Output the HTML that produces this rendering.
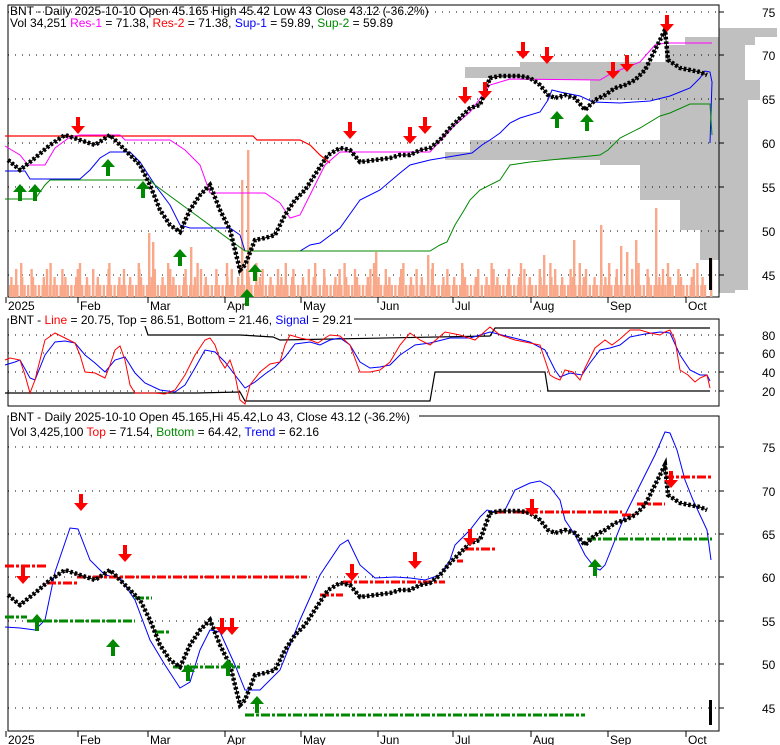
<!DOCTYPE html>
<html><head><meta charset="utf-8"><style>
html,body{margin:0;padding:0;background:#fff;width:780px;height:745px;overflow:hidden}
svg{display:block}
text{font-family:"Liberation Sans",Arial,sans-serif;font-size:12px;fill:#000}
.ax{font-size:13px}
.g{stroke:#000;stroke-width:1;stroke-dasharray:1 6;fill:none}
.t{stroke:#000;stroke-width:1}
</style></head><body>
<svg width="780" height="745" viewBox="0 0 780 745" xmlns="http://www.w3.org/2000/svg">
<defs>
<polyline id="price" fill="none" points="8,160 20,170 35,158 50,145 65,135 80,140 95,145 110,135 125,150 140,165 150,185 160,210 170,225 180,232 190,210 200,195 210,185 220,210 230,230 240,270 245,265 255,240 265,238 275,235 285,215 295,200 305,190 318,170 328,155 340,148 350,150 360,162 375,160 390,158 400,155 410,155 420,150 430,148 440,140 450,128 460,118 470,108 480,105 490,78 500,76 510,76 520,76 530,78 540,85 548,95 555,98 565,95 575,98 585,110 595,100 605,95 615,88 625,85 635,80 645,70 655,50 665,30 668,60 680,68 690,70 700,72 707,75"/>
<path id="dn" d="M-2,-16h4v9h5l-7,8l-7,-8h5z"/>
<path id="up" d="M-2,16h4v-9h5l-7,-8l-7,8h5z"/>
</defs>
<polygon fill="#c0c0c0" points="719,28 777,28 777,37 755,37 755,45 745,45 745,80 760,80 760,100 748,100 748,290 735,290 735,293 719,293 719,260 700,260 700,230 680,230 680,200 640,200 640,165 600,165 600,160 445,160 445,152 470,152 470,140 660,140 660,100 590,100 590,80 520,80 520,78 465,78 465,67 520,67 520,62 665,62 665,45 685,45 685,37 719,37"/>
<rect x="8" y="5" width="711" height="292" fill="none" stroke="#000"/>
<rect x="8" y="319" width="711" height="87" fill="none" stroke="#000"/>
<rect x="8" y="416" width="711" height="315" fill="none" stroke="#000"/>
<path class="g" d="M8,12H719M8,55H719M8,99H719M8,143H719M8,187H719M8,231H719M8,275H719M8,335H719M8,353H719M8,372H719M8,391H719M8,447H719M8,491H719M8,534H719M8,577H719M8,621H719M8,664H719M8,708H719"/>
<path class="t" d="M719,12h5M719,55h5M719,99h5M719,143h5M719,187h5M719,231h5M719,275h5M719,335h5M719,353h5M719,372h5M719,391h5M719,447h5M719,491h5M719,534h5M719,577h5M719,621h5M719,664h5M719,708h5M6,297v6M78,297v6M148,297v6M225,297v6M301,297v6M378,297v6M453,297v6M531,297v6M608,297v6M686,297v6M6,731v6M78,731v6M148,731v6M225,731v6M301,731v6M378,731v6M453,731v6M531,731v6M608,731v6M686,731v6"/>
<g fill="none" stroke="#f9a98a">
<line x1="9" y1="291" x2="707" y2="291" stroke-width="12" stroke-dasharray="2.4 1.2"/>
<line x1="10.2" y1="287" x2="707" y2="287" stroke-width="20" stroke-dasharray="2.4 8.4"/>
<line x1="15" y1="283" x2="707" y2="283" stroke-width="28" stroke-dasharray="2.4 13"/>
<line x1="20" y1="280" x2="707" y2="280" stroke-width="34" stroke-dasharray="2.4 27"/>
</g>
<path fill="#f9a98a" d="M247,150h2.4V297h-2.4zM241,180h2.4V297h-2.4zM148,233h2.4V297h-2.4zM152,242h2.4V297h-2.4zM190,247h2.4V297h-2.4zM655,208h2.4V297h-2.4zM635,240h2.4V297h-2.4zM626,252h2.4V297h-2.4zM620,246h2.4V297h-2.4zM375,252h2.4V297h-2.4zM427,255h2.4V297h-2.4zM600,225h2.4V297h-2.4zM710,258h2.4V297h-2.4zM543,255h2.4V297h-2.4zM573,240h2.4V297h-2.4z"/>
<polyline fill="none" stroke="#f00" stroke-width="1.2" points="5,136 253,136 257,140 300,140 310,145 320,155 330,163"/>
<polyline fill="none" stroke="#f0f" stroke-width="1" points="5,146 20,155 28,165 45,165 55,148 70,137 80,135 120,135 125,140 170,140 185,150 195,160 200,165 210,193 265,193 280,203 290,218 300,215 310,195 325,165 340,152 430,152 440,141 455,125 470,112 490,85 510,79 600,80 612,73 625,68 640,62 655,45 665,43 712,43"/>
<polyline fill="none" stroke="#00f" stroke-width="1" points="5,171 25,171 30,179 80,179 90,170 100,158 110,152 130,152 140,162 155,185 170,205 180,225 190,228 230,228 240,235 245,251 300,251 310,245 320,243 340,228 360,200 380,190 400,173 410,165 430,160 472,153 482,145 490,140 500,133 510,123 520,118 540,112 548,100 552,90 560,92 580,96 593,102 620,103 650,101 670,96 690,88 700,78 705,71 710,72 712,82 710,143"/>
<polyline fill="none" stroke="#080" stroke-width="1" points="5,199 35,199 45,185 50,180 150,180 155,185 245,251 430,251 440,245 447,242 455,225 463,212 470,200 480,190 500,180 510,165 530,162 550,160 570,158 600,155 608,150 620,138 640,128 660,116 670,113 690,104 710,104 712,135"/>
<use href="#price" stroke="#000" stroke-width="1"/>
<use href="#price" stroke="#000" stroke-width="4.5" stroke-dasharray="2.6 2"/>
<path fill="#000" d="M709,258h3v32h-3z"/>
<polyline fill="none" stroke="#000" stroke-width="1.2" points="145,326 148,335 240,335 273,337 280,340 490,336 495,328 710,328"/>
<polyline fill="none" stroke="#000" stroke-width="1.2" points="5,393 197,393 240,392 245,401 430,401 435,372 545,372 548,391 710,391"/>
<polyline fill="none" stroke="#00f" stroke-width="1" points="5,365 15,362 20,360 30,378 35,380 45,355 55,342 65,341 75,343 85,355 95,363 105,372 115,360 125,357 135,373 145,383 160,390 175,392 185,385 195,368 205,350 215,352 225,362 235,375 245,388 255,382 265,374 275,367 285,357 295,344 310,342 320,345 330,340 340,338 350,345 360,362 370,368 380,367 390,365 400,355 415,345 430,343 450,338 470,338 490,332 510,337 530,342 545,350 555,370 560,377 570,373 582,375 590,363 600,350 610,348 620,345 630,337 645,334 660,332 670,333 680,355 690,370 700,375 707,375 710,381"/>
<polyline fill="none" stroke="#f00" stroke-width="1" points="5,360 10,358 20,360 25,375 30,393 35,380 45,340 55,333 65,338 75,343 80,355 85,372 95,373 105,378 110,365 115,350 120,346 125,360 130,385 135,393 155,393 165,394 175,390 185,375 195,355 205,340 210,338 215,345 220,360 225,368 230,360 235,375 240,400 245,404 250,385 260,372 270,364 280,362 285,345 290,335 300,338 310,340 318,343 325,338 330,335 340,336 350,345 360,372 370,372 380,370 390,362 400,345 410,333 420,340 430,345 445,332 460,335 475,340 490,327 500,335 515,340 530,343 540,345 545,360 550,375 555,378 560,380 565,370 573,372 580,380 585,368 595,348 605,340 612,345 620,339 630,330 640,330 650,333 660,335 665,332 670,330 675,340 680,370 688,375 695,382 700,378 707,375 710,388"/>
<polyline fill="none" stroke="#00f" stroke-width="1" points="5,627 20,628 35,630 45,620 55,572 70,528 78,529 90,560 105,575 120,578 135,600 150,640 165,665 180,688 190,682 200,650 210,630 220,632 235,665 245,690 260,690 280,670 300,620 320,575 340,545 348,540 360,565 375,578 395,577 410,578 425,580 440,575 450,560 455,545 470,530 480,517 487,510 500,513 505,510 515,490 530,483 540,481 550,487 560,500 565,520 575,535 585,555 595,568 600,570 605,565 615,540 625,515 635,495 645,475 655,455 665,432 670,433 677,450 685,480 693,500 700,515 707,530 711,560"/>
<g stroke="#f00" stroke-width="3" stroke-dasharray="9 2 3 2" fill="none">
<path d="M5,566H47M47,583H77M77,577H307M320,595H343M343,582H445M457,561H463M465,549H497M497,512H622M622,515H635M637,504H665M665,477H712"/>
</g>
<g stroke="#080" stroke-width="3" stroke-dasharray="9 2 3 2" fill="none">
<path d="M5,617H27M27,621H135M135,598H152M155,632H170M173,667H240M245,715H585M587,539H712"/>
</g>
<g transform="translate(0,435)">
<use href="#price" stroke="#000" stroke-width="1"/>
<use href="#price" stroke="#000" stroke-width="4.5" stroke-dasharray="2.6 2"/>
</g>
<path fill="#000" d="M709,700h3v25h-3z"/>
<g fill="#f00">
<use href="#dn" x="78" y="133"/><use href="#dn" x="350" y="138"/><use href="#dn" x="410" y="143"/><use href="#dn" x="425" y="133"/><use href="#dn" x="465" y="103"/><use href="#dn" x="485" y="98"/><use href="#dn" x="523" y="58"/><use href="#dn" x="547" y="63"/><use href="#dn" x="613" y="78"/><use href="#dn" x="627" y="71"/><use href="#dn" x="667" y="31"/>
<use href="#dn" x="23" y="583"/><use href="#dn" x="81" y="510"/><use href="#dn" x="125" y="561"/><use href="#dn" x="222" y="634"/><use href="#dn" x="232" y="634"/><use href="#dn" x="352" y="580"/><use href="#dn" x="415" y="568"/><use href="#dn" x="470" y="545"/><use href="#dn" x="532" y="515"/><use href="#dn" x="671" y="487"/>
</g>
<g fill="#080">
<use href="#up" x="20" y="185"/><use href="#up" x="35" y="185"/><use href="#up" x="108" y="160"/><use href="#up" x="143" y="182"/><use href="#up" x="180" y="250"/><use href="#up" x="247" y="290"/><use href="#up" x="255" y="265"/><use href="#up" x="557" y="112"/><use href="#up" x="587" y="115"/>
<use href="#up" x="37" y="615"/><use href="#up" x="113" y="640"/><use href="#up" x="188" y="665"/><use href="#up" x="228" y="660"/><use href="#up" x="257" y="697"/><use href="#up" x="595" y="560"/>
</g>
<text x="10" y="15">BNT - Daily 2025-10-10 Open 45.165  High 45.42  Low 43  Close 43.12 (-36.2%)</text>
<text x="10" y="27">Vol 34,251 <tspan fill="#f0f">Res-1</tspan> = 71.38, <tspan fill="#f00">Res-2</tspan> = 71.38, <tspan fill="#00f">Sup-1</tspan> = 59.89, <tspan fill="#080">Sup-2</tspan> = 59.89</text>
<rect x="9" y="314" width="345" height="12" fill="#fff"/>
<text x="10" y="324">BNT - <tspan fill="#f00">Line</tspan> = 20.75, Top = 86.51, Bottom = 21.46, <tspan fill="#00f">Signal</tspan> = 29.21</text>
<rect x="9" y="410" width="410" height="12" fill="#fff"/>
<text x="10" y="421">BNT - Daily 2025-10-10 Open 45.165,Hi 45.42,Lo 43, Close 43.12 (-36.2%)</text>
<text x="10" y="436">Vol 3,425,100 <tspan fill="#f00">Top</tspan> = 71.54, <tspan fill="#080">Bottom</tspan> = 64.42, <tspan fill="#00f">Trend</tspan> = 62.16</text>
<g class="ax">
<text x="762" y="17">75</text><text x="762" y="60">70</text><text x="762" y="104">65</text><text x="762" y="148">60</text><text x="762" y="192">55</text><text x="762" y="236">50</text><text x="762" y="280">45</text>
<text x="762" y="340">80</text><text x="762" y="358">60</text><text x="762" y="377">40</text><text x="762" y="396">20</text>
<text x="762" y="452">75</text><text x="762" y="496">70</text><text x="762" y="539">65</text><text x="762" y="582">60</text><text x="762" y="626">55</text><text x="762" y="669">50</text><text x="762" y="713">45</text>
<text x="8" y="310">2025</text><text x="80" y="310">Feb</text><text x="150" y="310">Mar</text><text x="227" y="310">Apr</text><text x="303" y="310">May</text><text x="380" y="310">Jun</text><text x="455" y="310">Jul</text><text x="533" y="310">Aug</text><text x="610" y="310">Sep</text><text x="688" y="310">Oct</text>
<text x="8" y="744">2025</text><text x="80" y="744">Feb</text><text x="150" y="744">Mar</text><text x="227" y="744">Apr</text><text x="303" y="744">May</text><text x="380" y="744">Jun</text><text x="455" y="744">Jul</text><text x="533" y="744">Aug</text><text x="610" y="744">Sep</text><text x="688" y="744">Oct</text>
</g>
</svg>
</body></html>
